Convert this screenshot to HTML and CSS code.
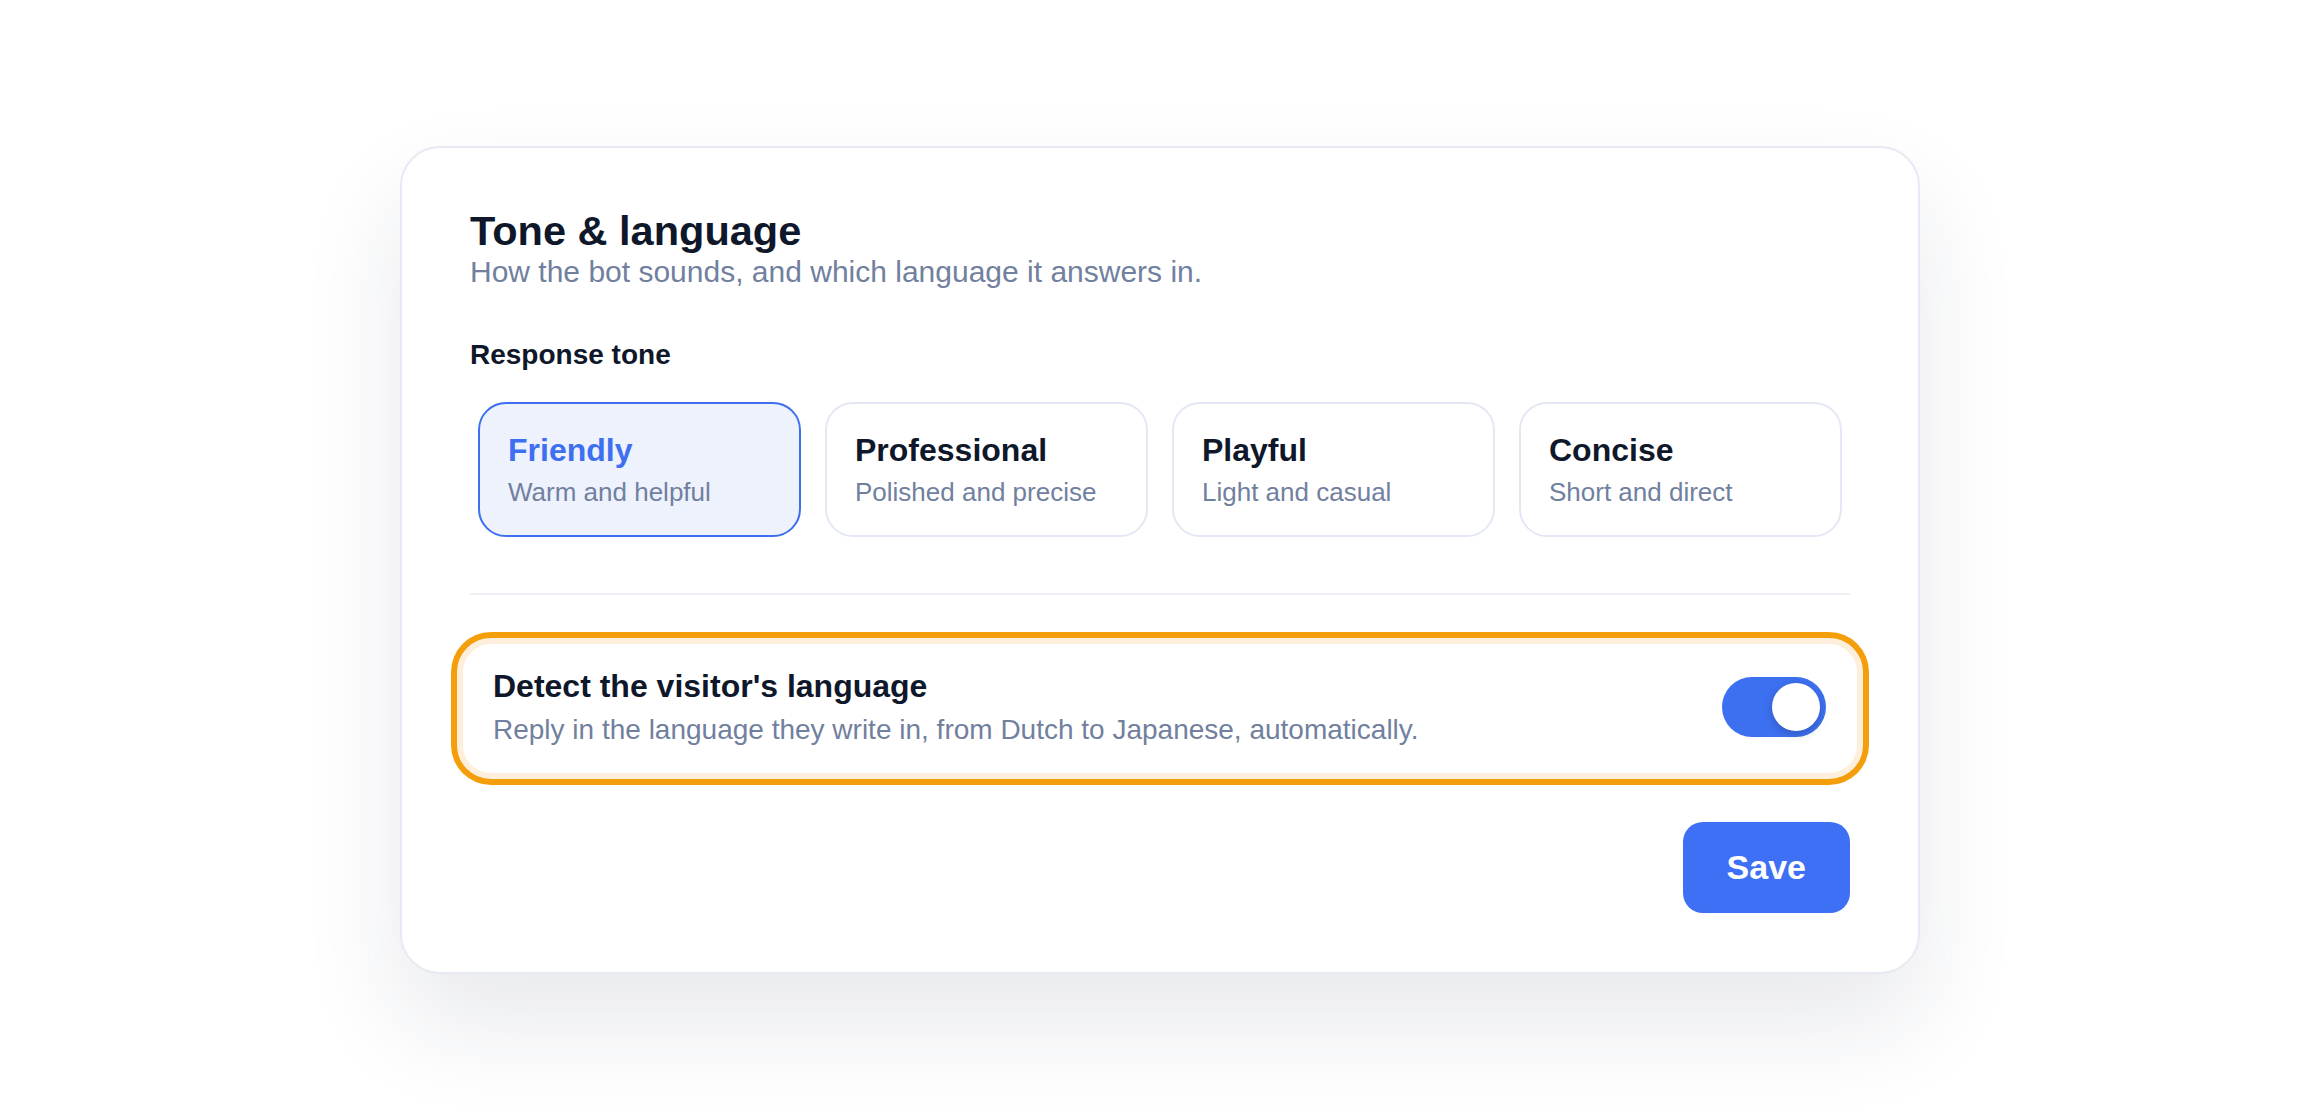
FILE: index.html
```html
<!DOCTYPE html>
<html lang="en">
<head>
    <meta charset="UTF-8">
    <meta name="viewport" content="width=device-width, initial-scale=1.0">
    <title>Tone &amp; language</title>
    <link rel="stylesheet" href="styles.css">
</head>
<body>
    <div class="page">
        <div class="card">
            <h1>Tone &amp; language</h1>
            <p class="subtitle">How the bot sounds, and which language it answers in.</p>

            <div class="label">Response tone</div>
            <div class="tones">
                <div class="tone selected">
                    <div class="tone-name">Friendly</div>
                    <div class="tone-desc">Warm and helpful</div>
                </div>
                <div class="tone">
                    <div class="tone-name">Professional</div>
                    <div class="tone-desc">Polished and precise</div>
                </div>
                <div class="tone">
                    <div class="tone-name">Playful</div>
                    <div class="tone-desc">Light and casual</div>
                </div>
                <div class="tone">
                    <div class="tone-name">Concise</div>
                    <div class="tone-desc">Short and direct</div>
                </div>
            </div>

            <div class="divider"></div>

            <div class="setting highlight">
                <div class="setting-text">
                    <div class="setting-title">Detect the visitor's language</div>
                    <div class="setting-desc">Reply in the language they write in, from Dutch to Japanese, automatically.</div>
                </div>
                <div class="toggle on"><span class="knob"></span></div>
            </div>

            <div class="actions">
                <button class="button">Save</button>
            </div>
        </div>
    </div>
</body>
</html>
```

FILE: styles.css
```css
body {
    font-family: 'Liberation Sans', Arial, sans-serif;
    background: #ffffff;
    margin: 0;
    color: #0f172a;
}

.page {
    min-height: 100vh;
    display: flex;
    align-items: center;
    justify-content: center;
}

.card {
    width: 1520px;
    box-sizing: border-box;
    background: #ffffff;
    border: 2px solid #e7eaf4;
    border-radius: 40px;
    padding: 59px 68px;
    box-shadow: 0 50px 100px rgba(30, 41, 82, 0.10);
}

h1 {
    margin: 0;
    font-size: 41.5px;
    line-height: 1.15;
    font-weight: bold;
    color: #0f172a;
}

.subtitle {
    margin: 0;
    font-size: 30px;
    line-height: 1.2;
    color: #71809e;
}

.label {
    margin-top: 48px;
    font-size: 28px;
    line-height: 1.2;
    font-weight: bold;
}

.tones {
    display: grid;
    grid-template-columns: repeat(4, 1fr);
    gap: 24px;
    padding: 0 8px;
    margin-top: 30px;
}

.tone {
    border: 2px solid #e3e8f4;
    border-radius: 28px;
    padding: 26px 28px 25px;
    background: #ffffff;
}

.tone.selected {
    background: #eef2fd;
    border-color: #3d6ff0;
}

.tone-name {
    font-size: 32px;
    line-height: 1.25;
    font-weight: bold;
    color: #0f172a;
}

.tone.selected .tone-name {
    color: #3d6ff0;
}

.tone-desc {
    margin-top: 6px;
    font-size: 26px;
    line-height: 1.3;
    color: #71809e;
}

.divider {
    height: 2px;
    background: #edf1f7;
    margin-top: 56px;
}

.setting {
    display: flex;
    align-items: center;
    justify-content: space-between;
    margin: 43px -13px 0;
    padding: 22px 31px 25px 30px;
    border-radius: 34px;
    background: #ffffff;
}

.setting.highlight {
    border: 6px solid #fdefdb;
    box-shadow: 0 0 0 6px #f59e0b;
}

.setting-title {
    font-size: 32px;
    line-height: 1.25;
    font-weight: bold;
}

.setting-desc {
    margin-top: 6px;
    font-size: 28px;
    line-height: 1.3;
    color: #71809e;
}

.toggle {
    width: 104px;
    height: 60px;
    box-sizing: border-box;
    padding: 6px;
    border-radius: 30px;
    background: #cbd5e1;
    display: flex;
    flex-shrink: 0;
}

.toggle.on {
    background: #3d70f0;
    justify-content: flex-end;
}

.knob {
    width: 48px;
    height: 48px;
    border-radius: 50%;
    background: #ffffff;
    box-shadow: 0 3px 8px rgba(15, 23, 42, 0.25);
}

.actions {
    display: flex;
    justify-content: flex-end;
    margin-top: 43px;
}

.button {
    font-family: inherit;
    background: #3d70f5;
    color: white;
    border: none;
    border-radius: 20px;
    padding: 0 44px;
    height: 91px;
    font-size: 34px;
    font-weight: bold;
    cursor: pointer;
}
```
